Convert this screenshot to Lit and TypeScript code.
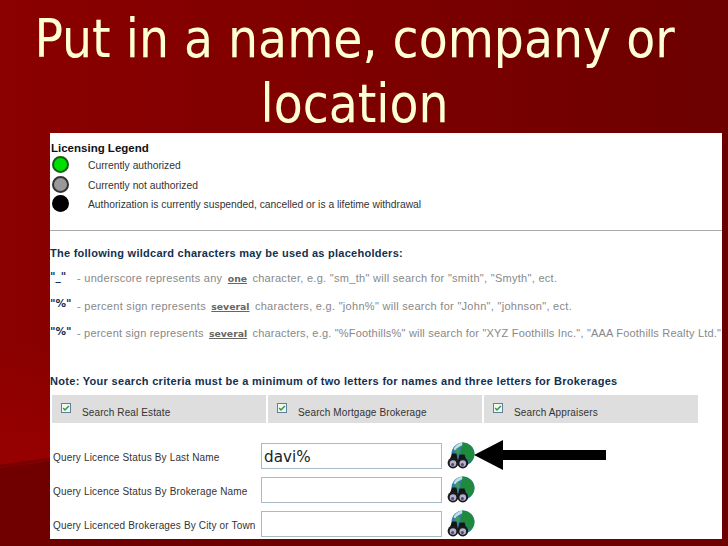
import { LitElement, html, css } from "lit";
import { customElement } from "lit/decorators.js";

const icon = () => html`<svg class="icon" viewBox="0 0 28 28" width="28" height="28">
  <circle cx="16" cy="12" r="11.500" fill="#2f7f9f"/>
  <path d="M6.500 7c2-4 6-6.500 9.500-6.500 1 2-1 3-3 4-3 1-3 3-5 4z" fill="#c5dde6"/>
  <path d="M15 .6c6 0 12 5 12.400 11.400 0 4-2 7-5 9-2-2-2-5-4-7-2-1-5-1-5-4 0-3 3-5 1.600-9.400z" fill="#1f8a3c"/>
  <path d="M9 7c2-1 4 0 4 2l-2 4-3-1z" fill="#3f9a5c"/>
  <path d="M1.500 21 5 11.500h4.500L11 21zM10.500 21l2-8.500h5L20.500 21z" fill="#151515"/>
  <circle cx="6" cy="21" r="5.400" fill="#1a1a1a"/><circle cx="15.800" cy="21" r="5.400" fill="#1a1a1a"/>
  <circle cx="6" cy="21.500" r="3.300" fill="#b3afcf"/><circle cx="15.800" cy="21.500" r="3.300" fill="#b3afcf"/>
  <circle cx="5.600" cy="22.400" r="1.500" fill="#4f4a68"/><circle cx="15.400" cy="22.400" r="1.500" fill="#4f4a68"/>
</svg>`;

const check = () => html`<svg class="check" viewBox="0 0 10 10" width="10" height="10">
  <rect x="0.5" y="0.5" width="9" height="9" fill="#f4f6f4" stroke="#5d7f9b"/>
  <path d="M2.2 5l1.800 2 3.800-4" fill="none" stroke="#2f9a3f" stroke-width="1.500"/>
</svg>`;

@customElement("app-root")
export class AppRoot extends LitElement {
  static styles = css`
    :host { display: block; width: 728px; height: 546px; overflow: hidden; }
    .slide {
      position: relative; width: 728px; height: 546px; display: flex; flex-direction: column; overflow: hidden;
      background: linear-gradient(90deg, #8b0000 0%, #7c0000 55%, #6c0000 100%);
    }
    .swoosh { position: absolute; left: 0; top: 0; }
    h1 {
      position: relative; margin: 0; height: 133px; padding: 6px 19px 0 0; box-sizing: border-box; text-align: center; color: #ffffd6;
      font: 400 52.7px/65px "DejaVu Sans Condensed", "DejaVu Sans", sans-serif;
    }
    .panel {
      position: relative; margin-left: 50px; width: 672px; height: 406px; background: #fff; box-sizing: border-box;
      font-family: "Liberation Sans", Arial, sans-serif; color: #333; display: flex; flex-direction: column; overflow: hidden;
    }
    .legend-title { margin: 8px 0 0 1px; font: 700 11.500px/14px "Liberation Sans", sans-serif; color: #111; height: 14px; }
    .legend-row { display: flex; align-items: center; height: 19.500px; font-size: 10.300px; color: #333; }
    .legend-row .dot { width: 17px; height: 17px; border-radius: 50%; box-sizing: border-box; border: 2px solid #333; margin: 0 19px 0 2px; }
    .legend-row span.t { padding-top: 2px; }
    .green { background: #00e000; border-color: #1a5a1a !important; }
    .grey { background: #999; }
    .black { background: #000; border-color: #000 !important; }
    hr { margin: 16px 0 0; border: 0; border-top: 1px solid #aaa; height: 0; }
    .h { font: 700 11px/14px "Liberation Sans", Arial, sans-serif; letter-spacing: .26px; color: #12304f; white-space: nowrap; }
    .wild { margin-top: 15px; }
    .rows { display: flex; flex-direction: column; }
    .row { display: flex; height: 27.500px; align-items: center; font-size: 11px; color: #888; white-space: pre; letter-spacing: .29px; }
    .row.tight { letter-spacing: .2px; }
    .row:first-child { margin-top: 5px; }
    .row b.k { flex: none; color: #12304f; font: 700 10.500px "DejaVu Sans", sans-serif; width: 27px; letter-spacing: 0; margin-top: -5px; }
    .row u { font: 700 9.300px "DejaVu Sans", sans-serif; color: #666; letter-spacing: 0; margin: 0 2px; }
    .note { margin-top: 27px; letter-spacing: .3px; }
    .checks { display: flex; gap: 2px; margin: 7px 0 0 2px; }
    .cell { width: 214px; height: 28px; background: #dedede; position: relative; font-size: 10px; color: #333; display: flex; align-items: center; box-sizing: border-box; padding: 6px 0 0 30px; letter-spacing: .12px; }
    .check { position: absolute; left: 9px; top: 8px; }
    .form { display: flex; flex-direction: column; gap: 8px; margin: 20px 0 0 3px; }
    .frow { display: flex; align-items: center; height: 26px; }
    .frow label { width: 208px; font-size: 10px; color: #333; white-space: nowrap; letter-spacing: .16px; padding-top: 2px; }
    .input { width: 181px; height: 26px; box-sizing: border-box; border: 1px solid #a9bcc4; font: 15.200px/26px "DejaVu Sans", sans-serif; color: #222; padding-left: 2px; background: #fff; }
    .icon { margin: -1px 0 0 5px; display: block; flex: none; }
    .arrow { position: absolute; left: 473px; top: 439px; }
  `;

  render() {
    return html`<div class="slide">
      <svg class="swoosh" width="728" height="546" viewBox="0 0 728 546">
        <defs><linearGradient id="b" x1="0" y1="0" x2="0" y2="1"><stop offset="0" stop-color="#980000" stop-opacity="0"/><stop offset="1" stop-color="#980000"/></linearGradient></defs>
        <path d="M0 340H50V461L0 468z" fill="url(#b)"/>
        <path d="M0 468L50 461V546H0z" fill="#700000"/>
        <path d="M0 466L50 459" stroke="#7a0000" stroke-width="3" fill="none"/>
        <rect x="0" y="539" width="728" height="7" fill="#6e0000"/>
      </svg>
      <h1>Put in a name, company or<br />location</h1>
      <div class="panel">
        <div class="legend-title">Licensing Legend</div>
        <div class="legend-row"><span class="dot green"></span><span class="t">Currently authorized</span></div>
        <div class="legend-row"><span class="dot grey"></span><span class="t">Currently not authorized</span></div>
        <div class="legend-row"><span class="dot black"></span><span class="t">Authorization is currently suspended, cancelled or is a lifetime withdrawal</span></div>
        <hr />
        <div class="h wild">The following wildcard characters may be used as placeholders:</div>
        <div class="rows">
          <div class="row"><b class="k">"_"</b><span>- underscore represents any <u>one</u> character, e.g. "sm_th" will search for "smith", "Smyth", ect.</span></div>
          <div class="row"><b class="k">"%"</b><span>- percent sign represents <u>several</u> characters, e.g. "john%" will search for "John", "johnson", ect.</span></div>
          <div class="row tight"><b class="k">"%"</b><span>- percent sign represents <u>several</u> characters, e.g. "%Foothills%" will search for "XYZ Foothills Inc.", "AAA Foothills Realty Ltd."</span></div>
        </div>
        <div class="h note">Note: Your search criteria must be a minimum of two letters for names and three letters for Brokerages</div>
        <div class="checks">
          <div class="cell">${check()}Search Real Estate</div>
          <div class="cell">${check()}Search Mortgage Brokerage</div>
          <div class="cell">${check()}Search Appraisers</div>
        </div>
        <div class="form">
          <div class="frow"><label>Query Licence Status By Last Name</label><div class="input">davi%</div>${icon()}</div>
          <div class="frow"><label>Query Licence Status By Brokerage Name</label><div class="input"></div>${icon()}</div>
          <div class="frow"><label>Query Licenced Brokerages By City or Town</label><div class="input"></div>${icon()}</div>
        </div>
      </div>
      <svg class="arrow" width="134" height="32" viewBox="0 0 134 32"><path d="M1 16 30 1V11H133V21H30V31z" fill="#000"/></svg>
    </div>`;
  }
}
